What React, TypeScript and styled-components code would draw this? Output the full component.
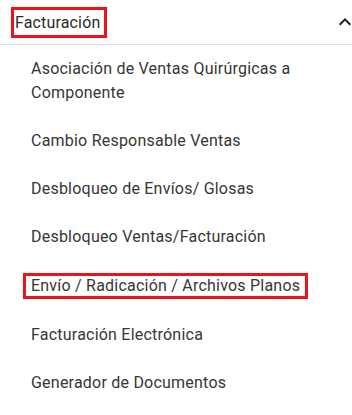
import React from 'react';
import styled, { createGlobalStyle } from 'styled-components';

const GlobalStyle = createGlobalStyle`
  html, body { margin: 0; padding: 0; background: #fff; }
  body { font-family: Roboto, "Liberation Sans", sans-serif; }
`;

const Panel = styled.div`
  width: 352px;
  overflow: hidden;
`;

const Header = styled.div`
  height: 44px;
  display: flex;
  align-items: center;
  justify-content: space-between;
  padding-left: 11px;
  border-bottom: 1px solid #e0e0e0;
`;

const Marked = styled.span`
  display: inline-flex;
  align-items: center;
  border: 3px solid #e8141a;
  padding: 0 4px 0 1px;
`;

const HeaderTitle = styled.span`
  font-size: 16px;
  line-height: 25px;
  letter-spacing: 0.15px;
  color: #2b2b2b;
`;

const Chevron = styled.svg`
  width: 24px;
  height: 24px;
  margin-right: -5px;
  flex-shrink: 0;
`;

const List = styled.ul`
  list-style: none;
  margin: 0;
  padding: 0;
`;

const Item = styled.li`
  padding: 12px 24px 12px 31px;
  font-size: 16px;
  line-height: 24px;
  letter-spacing: 0.22px;
  color: #363636;
`;

const ItemMarked = styled.span`
  display: inline-block;
  margin-left: -8px;
  padding: 0 5px;
  border: 3px solid #e8141a;
  line-height: 20px;
`;

const items = [
  'Asociación de Ventas Quirúrgicas a Componente',
  'Cambio Responsable Ventas',
  'Desbloqueo de Envíos/ Glosas',
  'Desbloqueo Ventas/Facturación',
  'Envío / Radicación / Archivos Planos',
  'Facturación Electrónica',
  'Generador de Documentos',
];

export default function App() {
  return (
    <>
      <GlobalStyle />
      <Panel>
        <Header>
          <Marked>
            <HeaderTitle>Facturación</HeaderTitle>
          </Marked>
          <Chevron viewBox="0 0 24 24">
            <path d="M12 8l-6 6 1.41 1.41L12 10.83l4.59 4.58L18 14z" fill="#1a1a1a" />
          </Chevron>
        </Header>
        <List>
          {items.map((label) => (
            <Item key={label}>
              {label.startsWith('Envío') ? <ItemMarked>{label}</ItemMarked> : label}
            </Item>
          ))}
        </List>
      </Panel>
    </>
  );
}
